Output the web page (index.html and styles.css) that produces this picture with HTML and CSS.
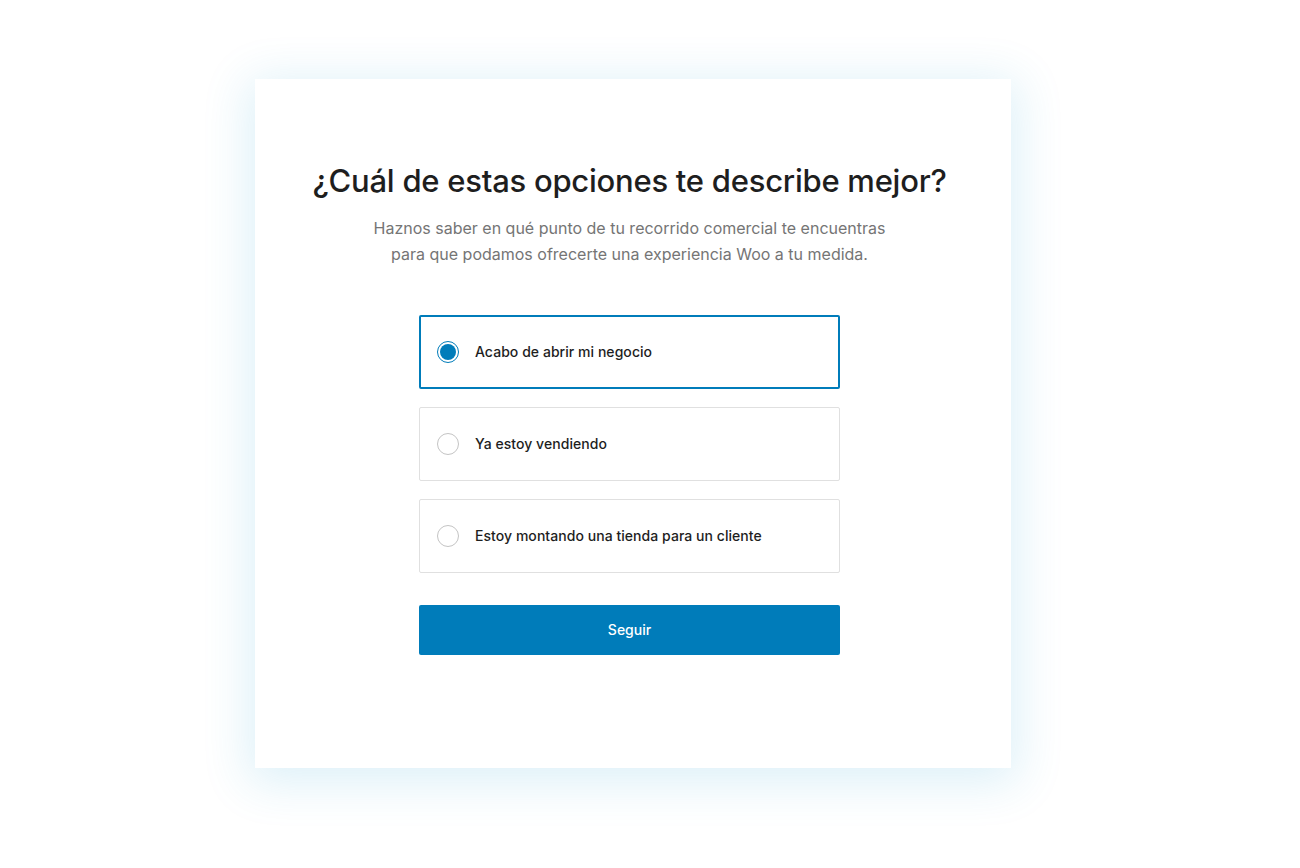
FILE: index.html
```html
<!DOCTYPE html>
<html lang="es">
<head>
<meta charset="utf-8">
<title>Perfil</title>
<link rel="stylesheet" href="styles.css">
</head>
<body>
<div class="page">
  <div class="card">
    <h1 class="title">¿Cuál de estas opciones te describe mejor?</h1>
    <p class="subtitle">Haznos saber en qué punto de tu recorrido comercial te encuentras<br>para que podamos ofrecerte una experiencia Woo a tu medida.</p>
    <div class="options">
      <label class="option selected"><span class="radio"></span><span class="label">Acabo de abrir mi negocio</span></label>
      <label class="option"><span class="radio"></span><span class="label">Ya estoy vendiendo</span></label>
      <label class="option"><span class="radio"></span><span class="label">Estoy montando una tienda para un cliente</span></label>
    </div>
    <button class="btn">Seguir</button>
  </div>
</div>
</body>
</html>
```
FILE: styles.css
```css
html, body {
  margin: 0;
  padding: 0;
  background: #ffffff;
}
body {
  font-family: Inter, "Noto Sans", Roboto, sans-serif;
  color: #1e1e1e;
}
.page {
  padding: 79px 0 100px 255px;
}
.card {
  width: 756px;
  height: 689px;
  box-sizing: border-box;
  background: #fff;
  box-shadow: 0 8px 44px 6px rgba(40, 160, 210, 0.16);
  display: flex;
  flex-direction: column;
  align-items: center;
  padding: 80px 7px 0 0;
}
.title {
  margin: 0;
  font-size: 31px;
  font-weight: 500;
  line-height: 44px;
  letter-spacing: -0.25px;
  color: #1e1e1e;
}
.subtitle {
  margin: 12px 0 0;
  font-size: 16px;
  line-height: 26px;
  color: #757575;
  text-align: center;
}
.options {
  margin-top: 48px;
  width: 421px;
  display: flex;
  flex-direction: column;
  gap: 18px;
}
.option {
  height: 74px;
  box-sizing: border-box;
  border: 1px solid #e0e0e0;
  border-radius: 2px;
  display: flex;
  align-items: center;
  padding: 0 0 1px 17px;
  gap: 16px;
}
.option.selected {
  border: 2px solid #007cba;
  padding-left: 16px;
}
.radio {
  width: 22px;
  height: 22px;
  box-sizing: border-box;
  border-radius: 50%;
  border: 1px solid #c4c4c4;
  background: #fff;
  flex: none;
  position: relative;
}
.option.selected .radio {
  border-color: #007cba;
}
.option.selected .radio::after {
  content: "";
  position: absolute;
  left: 2px;
  top: 2px;
  width: 16px;
  height: 16px;
  border-radius: 50%;
  background: #007cba;
}
.label {
  font-size: 14px;
  font-weight: 500;
  letter-spacing: 0.05px;
  color: #1e1e1e;
}
.btn {
  margin-top: 32px;
  width: 421px;
  height: 50px;
  border: none;
  border-radius: 2px;
  background: #007cba;
  color: #fff;
  font-family: inherit;
  font-size: 14px;
  font-weight: 500;
  padding: 0 0 2px;
}
```
